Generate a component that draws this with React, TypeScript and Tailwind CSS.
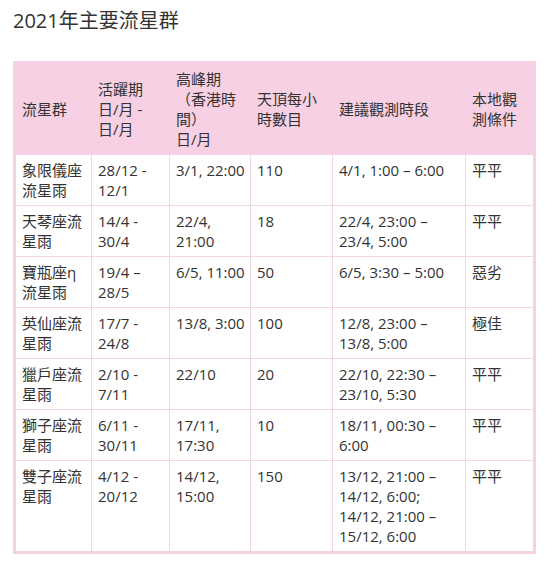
import React from "react";

const cols = "grid grid-cols-[75px_77px_80px_81px_132px_67px] gap-px";

const rows: string[][] = [
  ["象限儀座流星雨", "28/12 - 12/1", "3/1, 22:00", "110", "4/1, 1:00 – 6:00", "平平"],
  ["天琴座流星雨", "14/4 - 30/4", "22/4, 21:00", "18", "22/4, 23:00 – 23/4, 5:00", "平平"],
  ["寶瓶座η流星雨", "19/4 – 28/5", "6/5, 11:00", "50", "6/5, 3:30 – 5:00", "惡劣"],
  ["英仙座流星雨", "17/7 - 24/8", "13/8, 3:00", "100", "12/8, 23:00 – 13/8, 5:00", "極佳"],
  ["獵戶座流星雨", "2/10 - 7/11", "22/10", "20", "22/10, 22:30 – 23/10, 5:30", "平平"],
  ["獅子座流星雨", "6/11 - 30/11", "17/11, 17:30", "10", "18/11, 00:30 – 6:00", "平平"],
  ["雙子座流星雨", "4/12 - 20/12", "14/12, 15:00", "150", "13/12, 21:00 – 14/12, 6:00; 14/12, 21:00 – 15/12, 6:00", "平平"],
];

export default function App() {
  return (
    <div
      className="min-h-[573px] bg-white text-[#333333] [text-spacing-trim:space-all]"
      style={{ fontFamily: '"Open Sans", "Noto Sans CJK TC", sans-serif' }}
    >
      <h2 className="pl-[13px] pt-[8px] text-[20px] leading-[26px] font-normal">2021年主要流星群</h2>
      <div className="ml-[13px] mt-[27px] w-[523px] border-[3px] border-[#f8d0e3] bg-[#f3d6e5] flex flex-col gap-px text-[15px] leading-[20px]">
        <div className={`${cols} bg-[#f8d0e3]`}>
          <div className="flex items-center pl-[6px] pr-[4px] py-[5px]">流星群</div>
          <div className="flex items-center pl-[6px] pr-[4px] py-[5px]">
            <div>
              活躍期
              <br />
              日/月 - 日/月
            </div>
          </div>
          <div className="flex items-center pl-[6px] pr-[4px] py-[5px]">
            <div>
              高峰期
              <br />
              （香港時間）
              <br />
              日/月
            </div>
          </div>
          <div className="flex items-center pl-[6px] pr-[4px] py-[5px]">天頂每小時數目</div>
          <div className="flex items-center pl-[6px] pr-[4px] py-[5px]">建議觀測時段</div>
          <div className="flex items-center pl-[6px] pr-[4px] py-[5px]">本地觀測條件</div>
        </div>
        {rows.map((r, i) => (
          <div key={i} className={cols}>
            {r.map((c, j) => (
              <div key={j} className="bg-white pl-[6px] pr-[4px] py-[5px]">
                {c}
              </div>
            ))}
          </div>
        ))}
      </div>
    </div>
  );
}
